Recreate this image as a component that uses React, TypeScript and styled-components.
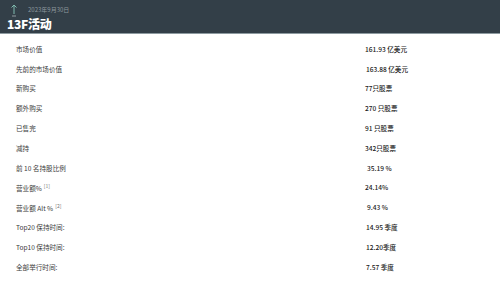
import React from "react";
import styled, { createGlobalStyle } from "styled-components";

const Global = createGlobalStyle`
  html, body { margin: 0; padding: 0; background: #ffffff; }
  body { font-family: "Noto Sans CJK SC", "Noto Sans", sans-serif; }
`;

const Page = styled.div`
  width: 500px;
  height: 281px;
  overflow: hidden;
  background: #ffffff;
  display: flex;
  flex-direction: column;
`;

const Header = styled.header`
  height: 34px;
  background: #333f48;
  border-bottom: 1px solid #8d9aa0;
  display: flex;
  flex-direction: column;
  padding: 3px 0 0 7px;
  box-sizing: border-box;
`;

const TopLine = styled.div`
  display: flex;
  align-items: flex-start;
  gap: 10px;
  height: 14px;
  padding-left: 3px;
`;

const DateText = styled.span`
  font-size: 6px;
  color: #8e999f;
  margin-top: 3px;
  line-height: 8px;
`;

const Title = styled.h1`
  margin: 0;
  font-size: 12px;
  line-height: 14px;
  font-weight: 800;
  color: #ffffff;
  letter-spacing: -0.3px;
`;

const List = styled.div`
  display: flex;
  flex-direction: column;
  padding-top: 5px;
`;

const Row = styled.div`
  display: grid;
  grid-template-columns: 349px 1fr;
  height: 19.8px;
  align-items: center;
  padding-left: 16px;
  font-size: 6.6px;
  color: #333;
`;

const Label = styled.span`
  color: #3a3a3a;
`;

const Sup = styled.sup`
  font-size: 5px;
  color: #777;
  margin-left: 2px;
`;

const Value = styled.span<{ $shift?: number }>`
  color: #1a1a1a;
  font-weight: 500;
  padding-left: ${(p) => p.$shift ?? 0}px;
`;

const ArrowIcon = () => (
  <svg width="8" height="14" viewBox="0 0 8 14">
    <path d="M4 11 V2 M1.5 4.5 L4 2 L6.5 4.5" stroke="#7fb9ad" strokeWidth="1" fill="none" />
    <path d="M2 13 H6" stroke="#a9b3b6" strokeWidth="0.8" />
  </svg>
);

const rows: { label: string; sup?: string; value: string; shift?: number }[] = [
  { label: "市场价值", value: "161.93 亿美元" },
  { label: "先前的市场价值", value: "163.88 亿美元", shift: 1 },
  { label: "新购买", value: "77只股票" },
  { label: "额外购买", value: "270 只股票" },
  { label: "已售完", value: "91 只股票" },
  { label: "减持", value: "342只股票" },
  { label: "前 10 名持股比例", value: "35.19 %", shift: 2 },
  { label: "营业额%", sup: "[1]", value: "24.14%" },
  { label: "营业额 Alt %", sup: "[2]", value: "9.43 %", shift: 2 },
  { label: "Top20 保持时间:", value: "14.95 季度", shift: 1 },
  { label: "Top10 保持时间:", value: "12.20季度", shift: 1 },
  { label: "全部举行时间:", value: "7.57 季度", shift: 1 },
];

export default function App() {
  return (
    <Page>
      <Global />
      <Header>
        <TopLine>
          <ArrowIcon />
          <DateText>2023年9月30日</DateText>
        </TopLine>
        <Title>13F活动</Title>
      </Header>
      <List>
        {rows.map((r) => (
          <Row key={r.label}>
            <Label>
              {r.label}
              {r.sup && <Sup>{r.sup}</Sup>}
            </Label>
            <Value $shift={r.shift}>{r.value}</Value>
          </Row>
        ))}
      </List>
    </Page>
  );
}
